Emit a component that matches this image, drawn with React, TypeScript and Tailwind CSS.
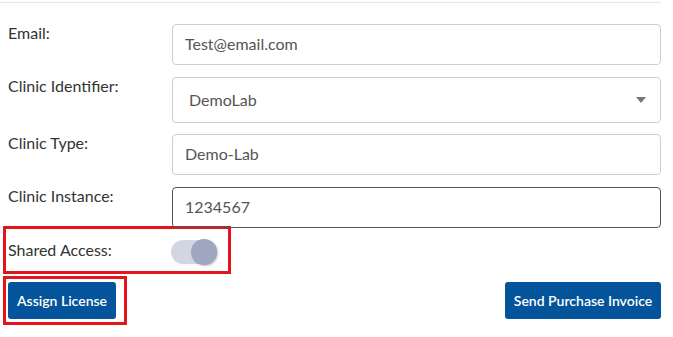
import { useState } from "react"

const FONT = "font-['Lato','Noto_Sans',sans-serif]"

function Field({ label, children }: { label: string; children: React.ReactNode }) {
	return (
		<div className="grid grid-cols-[164px_1fr] items-start">
			<label className="text-[16px] leading-5 text-[#333] -mt-px">{label}</label>
			{children}
		</div>
	)
}

export default function App() {
	const [shared, setShared] = useState(true)

	return (
		<div className={`w-[661px] h-[337px] bg-white ${FONT}`}>
			<div className="mt-[2px] border-t border-[#e6e6e6]" />
			<div className="flex flex-col pt-[21px] pl-2">
				<Field label="Email:">
					<input
						defaultValue="Test@email.com"
						className="h-[41px] w-full rounded border border-[#cfcfcf] px-3 pb-[3px] text-[16px] text-[#555] outline-none"
					/>
				</Field>
				<div className="mt-3">
					<Field label="Clinic Identifier:">
						<div className="h-[46px] w-full rounded border border-[#cfcfcf] pl-4 pr-[14px] flex items-center justify-between">
							<span className="text-[16px] text-[#555]">DemoLab</span>
							<span className="w-0 h-0 border-x-[5px] border-x-transparent border-t-[6px] border-t-[#777]" />
						</div>
					</Field>
				</div>
				<div className="mt-[11px]">
					<Field label="Clinic Type:">
						<input
							defaultValue="Demo-Lab"
							className="h-[41px] w-full rounded border border-[#cfcfcf] px-3 pb-[3px] text-[16px] text-[#555] outline-none"
						/>
					</Field>
				</div>
				<div className="mt-3">
					<Field label="Clinic Instance:">
						<input
							defaultValue="1234567"
							className="h-[41px] w-full rounded border border-[#555] px-3 pb-[3px] text-[16px] text-[#555] outline-none"
						/>
					</Field>
				</div>
			</div>

			{/* Shared access, highlighted */}
			<div className="ml-[3px] mt-[-2px] w-[228px] h-[48px] border-[3px] border-[#e3151b] flex items-center pl-[2px]">
				<span className="w-[163px] text-[16px] text-[#333] -mt-px">Shared Access:</span>
				<button
					type="button"
					onClick={() => setShared(s => !s)}
					className="relative w-[46px] h-[24px] rounded-full bg-[#d2d6e2] mt-[3px]"
				>
					<span
						className={`absolute top-[-1px] w-[26px] h-[26px] rounded-full bg-[#9ea7bf] shadow-[1px_1px_2px_rgba(0,0,0,0.25)] ${shared ? "right-0" : "left-0"}`}
					/>
				</button>
			</div>

			<div className="flex items-start justify-between mt-[2px]">
				<div className="ml-[3px] w-[124px] h-[49px] border-[3px] border-[#e3151b] pl-[2px] pt-[3px]">
					<button
						type="button"
						className="w-[108px] h-[37px] rounded-[3px] bg-[#03549a] text-white text-[14px] font-semibold"
					>
						Assign License
					</button>
				</div>
				<button
					type="button"
					className="mt-[6px] w-[156px] h-[37px] rounded-[3px] bg-[#03549a] text-white text-[14px] font-semibold"
				>
					Send Purchase Invoice
				</button>
			</div>
		</div>
	)
}
